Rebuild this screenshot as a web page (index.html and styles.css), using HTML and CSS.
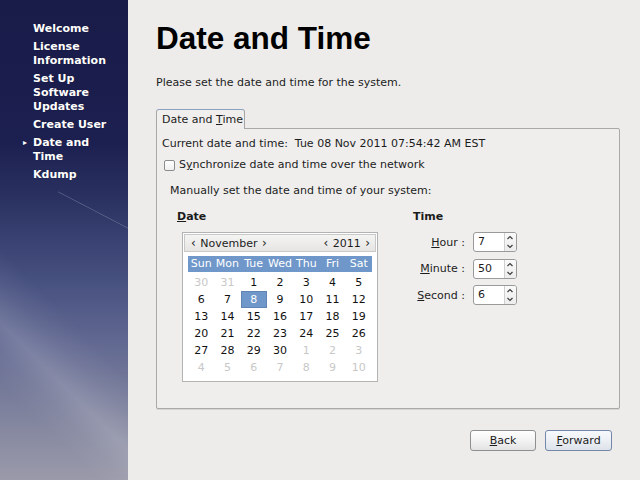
FILE: index.html
```html
<!DOCTYPE html>
<html lang="en">

<head>
    <meta charset="UTF-8">
    <title>Date and Time</title>
    <link rel="stylesheet" href="styles.css">
</head>

<body>
    <div class="screen">
        <nav class="sidebar">
            <div class="step"><span class="mark"></span><span>Welcome</span></div>
            <div class="step"><span class="mark"></span><span>License<br>Information</span></div>
            <div class="step"><span class="mark"></span><span>Set Up<br>Software<br>Updates</span></div>
            <div class="step"><span class="mark"></span><span>Create User</span></div>
            <div class="step current"><span class="mark">&#9656;</span><span>Date and<br>Time</span></div>
            <div class="step"><span class="mark"></span><span>Kdump</span></div>
        </nav>

        <main class="content">
            <h1>Date and Time</h1>
            <p class="intro">Please set the date and time for the system.</p>

            <div class="tabs">
                <div class="tab">Date and <u>T</u>ime</div>
            </div>
            <div class="panel">
                <p class="current-time">Current date and time:&nbsp; Tue 08 Nov 2011 07:54:42 AM EST</p>
                <div class="sync"><span class="check"></span><span>S<u>y</u>nchronize date and time over the network</span></div>
                <p class="manual">Manually set the date and time of your system:</p>

                <div class="columns">
                    <section class="date-col">
                        <h2><u>D</u>ate</h2>
                        <div class="calendar">
                            <div class="cal-head">
                                <span class="nav"><span class="chev">&lsaquo;</span> November <span class="chev">&rsaquo;</span></span>
                                <span class="nav"><span class="chev">&lsaquo;</span> 2011 <span class="chev">&rsaquo;</span></span>
                            </div>
                            <div class="cal-days">
                                <span>Sun</span><span>Mon</span><span>Tue</span><span>Wed</span><span>Thu</span><span>Fri</span><span>Sat</span>
                            </div>
                            <div class="cal-grid">
                                <span class="dim">30</span><span class="dim">31</span><span>1</span><span>2</span><span>3</span><span>4</span><span>5</span>
                                <span>6</span><span>7</span><span class="selected">8</span><span>9</span><span>10</span><span>11</span><span>12</span>
                                <span>13</span><span>14</span><span>15</span><span>16</span><span>17</span><span>18</span><span>19</span>
                                <span>20</span><span>21</span><span>22</span><span>23</span><span>24</span><span>25</span><span>26</span>
                                <span>27</span><span>28</span><span>29</span><span>30</span><span class="dim">1</span><span class="dim">2</span><span class="dim">3</span>
                                <span class="dim">4</span><span class="dim">5</span><span class="dim">6</span><span class="dim">7</span><span class="dim">8</span><span class="dim">9</span><span class="dim">10</span>
                            </div>
                        </div>
                    </section>

                    <section class="time-col">
                        <h2>Time</h2>
                        <div class="time-grid">
                            <span class="time-label"><u>H</u>our :</span>
                            <div class="spin">
                                <span class="spin-value">7</span>
                                <span class="spin-arrows">
                                    <svg width="10" height="9" viewBox="0 0 10 9"><path d="M2.5 6 L5 3.5 L7.5 6" fill="none" stroke="#3c3c3c" stroke-width="1.2"/></svg>
                                    <svg width="10" height="9" viewBox="0 0 10 9"><path d="M2.5 3 L5 5.5 L7.5 3" fill="none" stroke="#3c3c3c" stroke-width="1.2"/></svg>
                                </span>
                            </div>
                            <span class="time-label"><u>M</u>inute :</span>
                            <div class="spin">
                                <span class="spin-value">50</span>
                                <span class="spin-arrows">
                                    <svg width="10" height="9" viewBox="0 0 10 9"><path d="M2.5 6 L5 3.5 L7.5 6" fill="none" stroke="#3c3c3c" stroke-width="1.2"/></svg>
                                    <svg width="10" height="9" viewBox="0 0 10 9"><path d="M2.5 3 L5 5.5 L7.5 3" fill="none" stroke="#3c3c3c" stroke-width="1.2"/></svg>
                                </span>
                            </div>
                            <span class="time-label"><u>S</u>econd :</span>
                            <div class="spin">
                                <span class="spin-value">6</span>
                                <span class="spin-arrows">
                                    <svg width="10" height="9" viewBox="0 0 10 9"><path d="M2.5 6 L5 3.5 L7.5 6" fill="none" stroke="#3c3c3c" stroke-width="1.2"/></svg>
                                    <svg width="10" height="9" viewBox="0 0 10 9"><path d="M2.5 3 L5 5.5 L7.5 3" fill="none" stroke="#3c3c3c" stroke-width="1.2"/></svg>
                                </span>
                            </div>
                        </div>
                    </section>
                </div>
            </div>

            <div class="buttons">
                <button class="btn"><u>B</u>ack</button>
                <button class="btn default"><u>F</u>orward</button>
            </div>
        </main>
    </div>
</body>

</html>
```

FILE: styles.css
```css
html,
body {
    margin: 0;
    padding: 0;
    width: 640px;
    height: 480px;
    overflow: hidden;
    font-family: 'DejaVu Sans', sans-serif;
    font-size: 11px;
    color: #1c1c1c;
}

.screen {
    display: flex;
    height: 480px;
    background: #edeceb;
}

/* left step list */
.sidebar {
    width: 128px;
    flex-shrink: 0;
    padding-top: 22px;
    box-sizing: border-box;
    display: flex;
    flex-direction: column;
    gap: 4px;
    background:
        linear-gradient(27.5deg, transparent 49.2%, rgba(255, 255, 255, 0.22) 50%, transparent 50.9%) 58px 180px / 70px 60px no-repeat,
        linear-gradient(225deg, transparent 62%, rgba(255, 255, 255, 0.06) 68%, rgba(255, 255, 255, 0.15) 74%, rgba(255, 255, 255, 0.05) 79%, transparent 84%),
        linear-gradient(to bottom, #191b48 0%, #1c2050 30%, #2b3363 42%, #46507f 58%, #636a92 72%, #83869f 88%, #9a9aaa 100%);
}

.step {
    display: grid;
    grid-template-columns: 33px 1fr;
    color: #fff;
    font-weight: bold;
    line-height: 14px;
    text-shadow: 0 0 1px rgba(0, 0, 0, 0.4);
}

.mark {
    text-align: right;
    padding-right: 6px;
    font-size: 8px;
}

/* main area */
.content {
    flex: 1;
    padding: 20px 20px 0 28px;
    display: flex;
    flex-direction: column;
}

h1 {
    margin: 0;
    font-family: 'Liberation Sans', Arial, sans-serif;
    font-size: 31.5px;
    line-height: 36px;
    color: #000;
}

.intro {
    margin: 20px 0 0;
    line-height: 14px;
}

.tabs {
    margin-top: 19px;
    display: flex;
}

.tab {
    height: 20px;
    box-sizing: border-box;
    width: 89px;
    padding-left: 5px;
    line-height: 19px;
    border: 1px solid #a6a6a6;
    border-top-color: #8da2c2;
    border-bottom: none;
    border-radius: 3px 3px 0 0;
    background: #f0efee;
    position: relative;
    z-index: 1;
}

.panel {
    margin-top: -1px;
    height: 281px;
    box-sizing: border-box;
    border: 1px solid #a9a9a9;
    border-radius: 0 2px 2px 2px;
    background: #efeeed;
    padding: 8px 0 0 5px;
    box-shadow: 0 1px 0 #d6d5d4;
}

.panel p {
    margin: 0;
    line-height: 14px;
}

.sync {
    margin: 7px 0 0 2px;
    display: flex;
    align-items: center;
    gap: 4px;
    line-height: 14px;
}

.check {
    width: 11px;
    height: 11px;
    box-sizing: border-box;
    border: 1px solid #8c8c8c;
    border-radius: 2px;
    background: linear-gradient(#ffffff, #f0f0f0);
}

.panel .manual {
    margin-top: 12px;
    padding-left: 8px;
}

.columns {
    margin-top: 12px;
    padding-left: 15px;
    display: flex;
}

h2 {
    margin: 0 0 8px;
    font-size: 11px;
    line-height: 14px;
    font-weight: bold;
}

.date-col {
    width: 236px;
}

/* calendar */
.calendar {
    margin-left: 5px;
    width: 196px;
    height: 150px;
    box-sizing: border-box;
    border: 1px solid #b3b3b3;
    background: #fff;
    padding: 1px;
}

.cal-head {
    height: 18px;
    box-sizing: border-box;
    border: 1px solid #c9c9c9;
    background: linear-gradient(#f4f4f3, #e6e5e4);
    display: flex;
    justify-content: space-between;
    padding: 0 4px 0 5px;
    line-height: 16px;
}

.chev {
    font-size: 12px;
    margin: 0 1px;
}

.cal-days,
.cal-grid {
    margin: 0 4px;
    display: grid;
    grid-template-columns: repeat(7, 1fr);
    text-align: center;
}

.cal-days {
    margin-top: 4px;
    height: 16px;
    line-height: 16px;
    background: #7097c9;
    color: #fff;
}

.cal-grid {
    margin-top: 2px;
    grid-auto-rows: 17px;
    line-height: 17px;
    color: #111;
}

.cal-grid .dim {
    color: #c8c8c8;
}

.cal-grid .selected {
    background: #7097c9;
    color: #fff;
    box-shadow: inset 0 0 0 1px #6284b4;
}

/* time spinners */
.time-grid {
    display: grid;
    grid-template-columns: 52px 44px;
    grid-auto-rows: 20px;
    column-gap: 8px;
    row-gap: 6.5px;
    align-items: center;
}

.time-label {
    text-align: right;
}

.spin {
    height: 20px;
    box-sizing: border-box;
    border: 1px solid #9a9a9a;
    border-radius: 3px;
    background: #fff;
    display: flex;
}

.spin-value {
    flex: 1;
    padding-left: 4px;
    line-height: 18px;
}

.spin-arrows {
    width: 11px;
    border-left: 1px solid #cfcfcf;
    background: linear-gradient(#fafafa, #ececec);
    display: flex;
    flex-direction: column;
    border-radius: 0 2px 2px 0;
}

.spin-arrows svg {
    display: block;
}

/* bottom buttons */
.buttons {
    margin-top: 21px;
    padding-right: 8px;
    display: flex;
    justify-content: flex-end;
    gap: 9px;
}

.btn {
    height: 21px;
    width: 66px;
    font-family: 'DejaVu Sans', sans-serif;
    font-size: 11px;
    color: #1c1c1c;
    padding: 0;
    border: 1px solid #8f8f8f;
    border-radius: 3px;
    background: linear-gradient(#ffffff, #f3f3f3 50%, #e3e3e3);
}

.btn.default {
    width: 67px;
    border-color: #7387ab;
    background: linear-gradient(#f7f9fc, #eceff4 50%, #dde2ea);
}
```
